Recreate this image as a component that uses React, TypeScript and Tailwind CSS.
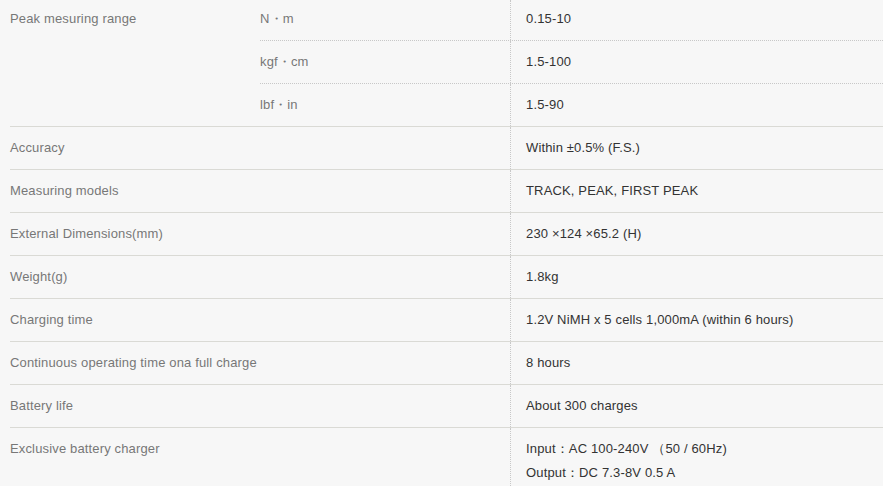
import React from "react";

const rows: { label: string; value: React.ReactNode }[] = [
  { label: "Accuracy", value: "Within ±0.5% (F.S.)" },
  { label: "Measuring models", value: "TRACK, PEAK, FIRST PEAK" },
  { label: "External Dimensions(mm)", value: "230 ×124 ×65.2 (H)" },
  { label: "Weight(g)", value: "1.8kg" },
  { label: "Charging time", value: "1.2V NiMH x 5 cells 1,000mA (within 6 hours)" },
  { label: "Continuous operating time ona full charge", value: "8 hours" },
  { label: "Battery life", value: "About 300 charges" },
  {
    label: "Exclusive battery charger",
    value: (
      <>
        <div>Input：AC 100-240V （50 / 60Hz)</div>
        <div>Output：DC 7.3-8V 0.5 A</div>
      </>
    ),
  },
];

const subs = [
  { unit: "N・m", value: "0.15-10" },
  { unit: "kgf・cm", value: "1.5-100" },
  { unit: "lbf・in", value: "1.5-90" },
];

export default function App() {
  return (
    <div
      className="w-[883px] h-[486px] overflow-hidden bg-[#f7f7f7] pl-[10px] text-[13px] leading-[24px] tracking-[0.15px]"
      style={{ fontFamily: '"Liberation Sans", Arial, sans-serif' }}
    >
      <div className="flex border-b border-[#dadad5]">
        <div className="w-[250px] shrink-0 pt-[7px] text-[#777]">Peak mesuring range</div>
        <div className="flex-1 flex flex-col">
          {subs.map((s, i) => (
            <div
              key={s.unit}
              className={`flex ${i < subs.length - 1 ? "border-b border-dotted border-[#c8c8c8]" : ""}`}
            >
              <div
                className={`w-[250px] shrink-0 text-[#777] ${i === 0 ? "pt-[7px] pb-[9px]" : "pt-[9px] pb-[9px]"}`}
              >
                {s.unit}
              </div>
              <div
                className={`flex-1 border-l border-dotted border-[#c8c8c8] pl-[15px] text-[#333] ${i === 0 ? "pt-[7px] pb-[9px]" : "pt-[9px] pb-[9px]"}`}
              >
                {s.value}
              </div>
            </div>
          ))}
        </div>
      </div>
      {rows.map((r) => (
        <div key={r.label} className="flex border-b border-[#dadad5]">
          <div className="w-[500px] shrink-0 pt-[9px] pb-[9px] text-[#777]">{r.label}</div>
          <div className="flex-1 border-l border-dotted border-[#c8c8c8] pl-[15px] pt-[9px] pb-[9px] text-[#333]">
            {r.value}
          </div>
        </div>
      ))}
    </div>
  );
}
